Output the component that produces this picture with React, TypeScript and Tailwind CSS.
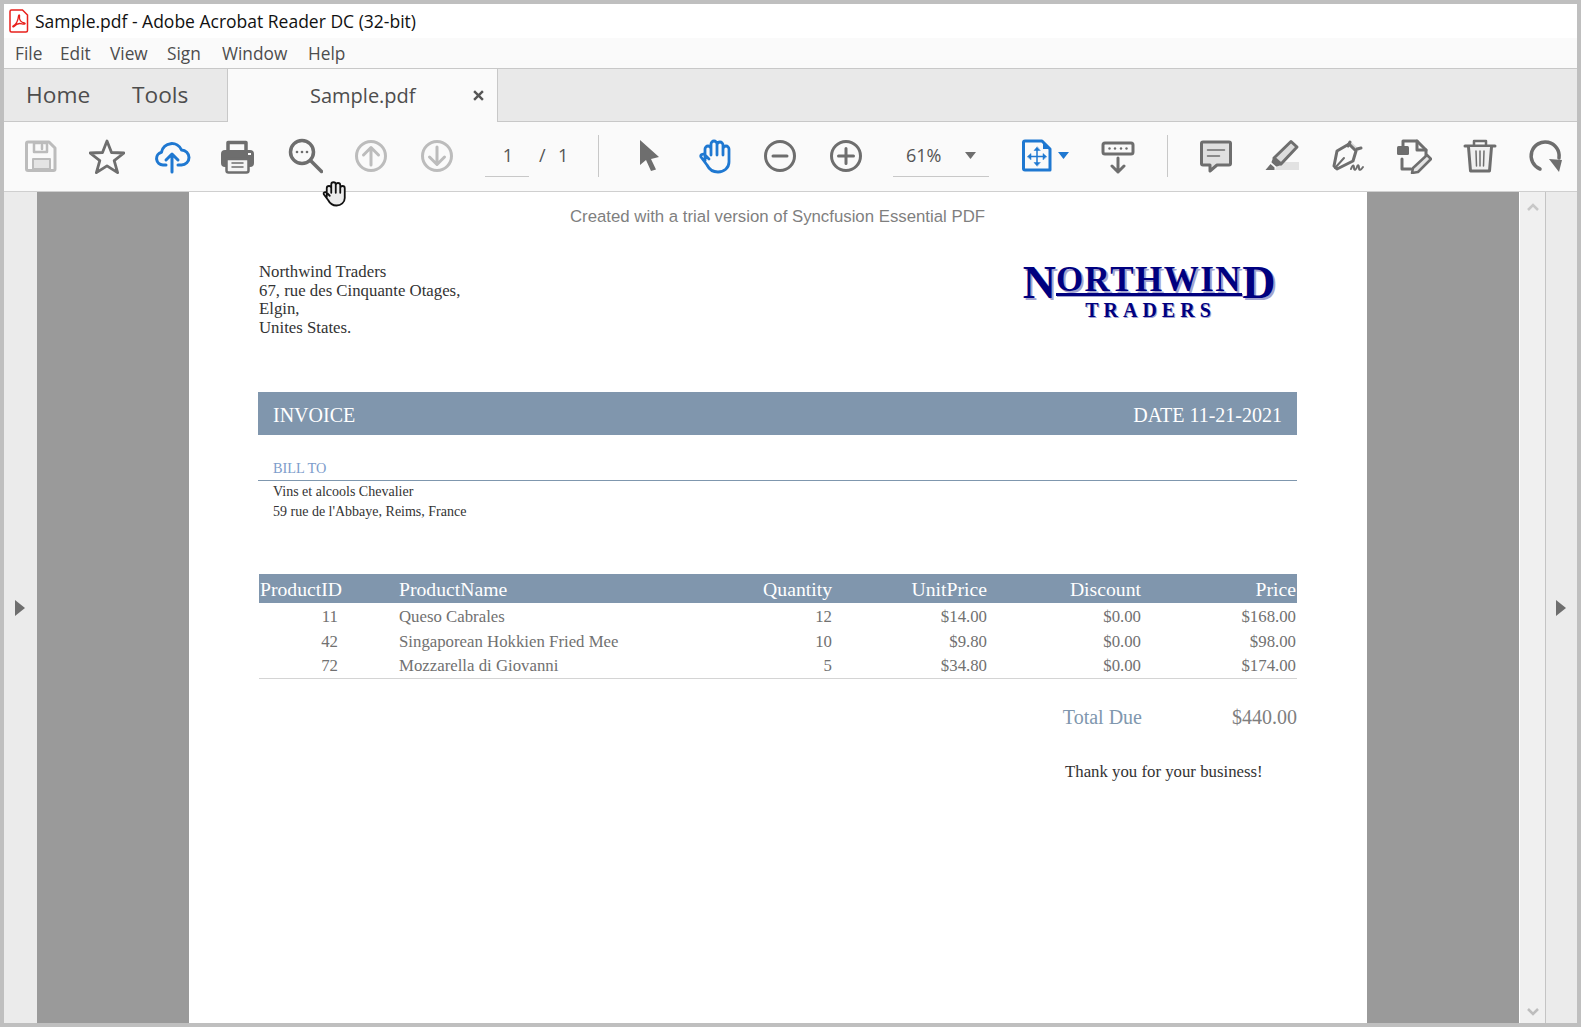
import type { ReactNode } from 'react'

const GREY = '#6e6e6e'
const LIGHT = '#bcbcbc'
const BLUE = '#1f78d1'

function Ico({ children }: { readonly children: ReactNode }) {
  return (
    <svg width="36" height="36" viewBox="0 0 36 36" fill="none" strokeLinecap="round" strokeLinejoin="round">
      {children}
    </svg>
  )
}

function Slot({ children }: { readonly children: ReactNode }) {
  return <div className="flex h-full w-[66px] shrink-0 items-center justify-center">{children}</div>
}

const SaveIcon = () => (
  <Ico>
    <path d="M5 4h21l6 6v21a1.500 1.500 0 0 1-1.500 1.500h-25.500a1.500 1.500 0 0 1-1.500-1.500V5.500A1.500 1.500 0 0 1 5 4z" stroke={LIGHT} strokeWidth="3" />
    <path d="M11 5h13v9H11z" stroke={LIGHT} strokeWidth="2.500" />
    <path d="M19 7v4" stroke={LIGHT} strokeWidth="2.500" />
    <path d="M10 21h17v10H10z" fill="#e4e4e4" stroke={LIGHT} strokeWidth="2" />
  </Ico>
)

const StarIcon = () => (
  <Ico>
    <path d="M18 3l4.500 11.500 12.500.5-9.800 7.700 3.400 12-10.600-6.900-10.600 6.900 3.400-12L1 15l12.500-.5z" stroke={GREY} strokeWidth="2.800" />
  </Ico>
)

const CloudIcon = () => (
  <Ico>
    <path d="M11 27H8a6.500 6.500 0 0 1-1.500-12.800A10.500 10.500 0 0 1 26.500 12a7.500 7.500 0 0 1 0 15H23" stroke={BLUE} strokeWidth="3" />
    <path d="M17 34V17M11 22l6-6 6 6" stroke={BLUE} strokeWidth="3" />
  </Ico>
)

const PrintIcon = () => (
  <Ico>
    <path d="M7 14V4.500h18V14" stroke={GREY} strokeWidth="3.500" />
    <rect x="0" y="12" width="33" height="17" rx="4" fill={GREY} />
    <path d="M5.500 21h22v11.500a2 2 0 0 1-2 2h-18a2 2 0 0 1-2-2z" fill="#f4f4f4" stroke={GREY} strokeWidth="2.500" />
    <path d="M11 25h11M11 29h11" stroke={GREY} strokeWidth="1.500" />
    <rect x="27" y="15" width="3" height="2" fill="#fff" />
  </Ico>
)

const SearchIcon = () => (
  <Ico>
    <circle cx="15" cy="14" r="11.500" stroke={GREY} strokeWidth="3.500" />
    <path d="M23.500 22.500l11 11" stroke={GREY} strokeWidth="3.500" />
    <circle cx="10" cy="14" r="1.300" fill={GREY} />
    <circle cx="15" cy="14" r="1.300" fill={GREY} />
    <circle cx="20" cy="14" r="1.300" fill={GREY} />
  </Ico>
)

const CircleArrow = ({ up }: { readonly up: boolean }) => (
  <Ico>
    <circle cx="18" cy="18" r="14.500" stroke={LIGHT} strokeWidth="3" />
    <path d={up ? 'M18 27V10M10.500 17l7.500-7.500 7.500 7.500' : 'M18 9v17M10.500 19l7.500 7.500 7.500-7.500'} stroke={LIGHT} strokeWidth="3" />
  </Ico>
)

const ArrowIcon = () => (
  <Ico>
    <path d="M10 2v25l6-5 5 11 5-1.500-5-10.500 8-2z" fill={GREY} />
  </Ico>
)

const HAND =
  'M9 23V11a3 3 0 0 1 6 0v6V6a3 3 0 0 1 6 0v11V7a3 3 0 0 1 6 0v10V11a3 3 0 0 1 6 0v13c0 6-5 10-11 10-6 0-9-3-11-7l-6-8c-1-2 2-4 4-2l4 4'

const HandIcon = ({ size, stroke, fill, width }: { readonly size: number; readonly stroke: string; readonly fill: string; readonly width: number }) => (
  <svg width={size} height={size} viewBox="0 0 36 36" fill={fill} strokeLinecap="round" strokeLinejoin="round">
    <path d={HAND} stroke={stroke} strokeWidth={width} />
  </svg>
)

const ZoomOut = () => (
  <Ico>
    <circle cx="18" cy="18" r="14.500" stroke={GREY} strokeWidth="3" />
    <path d="M11 18h14" stroke={GREY} strokeWidth="3" />
  </Ico>
)

const ZoomIn = () => (
  <Ico>
    <circle cx="18" cy="18" r="14.500" stroke={GREY} strokeWidth="3" />
    <path d="M10.500 18h15M18 10.500v15" stroke={GREY} strokeWidth="3" />
  </Ico>
)

const FitIcon = () => (
  <Ico>
    <path d="M6 3h17l8 8v21H6a1.500 1.500 0 0 1-1.500-1.500v-26A1.500 1.500 0 0 1 6 3z" stroke={BLUE} strokeWidth="3" />
    <path d="M24 3v8h8z" fill={BLUE} />
    <path d="M18 9l-3 3.500h6zM18 28l-3-3.500h6zM8.500 18.500l3.500-3v6zM27.500 18.500l-3.500-3v6z" fill={BLUE} stroke={BLUE} strokeWidth="0.500" />
    <path d="M18 12v13M12 18.500h12" stroke={BLUE} strokeWidth="1.500" />
  </Ico>
)

const ReadIcon = () => (
  <Ico>
    <rect x="3" y="5" width="30" height="11" rx="2" stroke={GREY} strokeWidth="3" />
    <circle cx="9.500" cy="10.500" r="1.200" fill={GREY} />
    <circle cx="15" cy="10.500" r="1.200" fill={GREY} />
    <circle cx="21" cy="10.500" r="1.200" fill={GREY} />
    <circle cx="26.500" cy="10.500" r="1.200" fill={GREY} />
    <path d="M18 20v14M12 28l6 6 6-6" stroke={GREY} strokeWidth="3" />
  </Ico>
)

const CommentIcon = () => (
  <Ico>
    <path d="M5 4h26a1.500 1.500 0 0 1 1.500 1.500v20a1.500 1.500 0 0 1-1.500 1.500H19l-7 6v-6H5a1.500 1.500 0 0 1-1.500-1.500v-20A1.500 1.500 0 0 1 5 4z" fill="#e0e0e0" stroke={GREY} strokeWidth="3" />
    <path d="M9.500 12h17M9.500 18h12" stroke={GREY} strokeWidth="1.500" />
  </Ico>
)

const HighlightIcon = () => (
  <Ico>
    <path d="M11 32h24v-8H15z" fill="#e2e2e2" />
    <path d="M27 3.500l6 5.500L17 26l-7-6z" fill="#dcdcdc" stroke={GREY} strokeWidth="3" />
    <path d="M10 20l-1.500 4 4 3.500 4.500-1.500" fill={GREY} stroke={GREY} strokeWidth="2" />
    <path d="M1.500 32l5-6 4 3.500V32z" fill={GREY} />
  </Ico>
)

const SignIcon = () => (
  <Ico>
    <path d="M20 3l10 9-4 2-8-7z" fill="#d9d9d9" />
    <path d="M19 6l7 7-3 10-16 8-3-3 3-15z" stroke={GREY} strokeWidth="3" />
    <path d="M5 30l9-10" stroke={GREY} strokeWidth="2" />
    <path d="M20 4l-2 4M27 11l4-1" stroke={GREY} strokeWidth="3" />
    <path d="M21 31c2-5 3-4 3-1s2 2 3-1 2-2 2 1 2 2 4-1" stroke={GREY} strokeWidth="2" />
  </Ico>
)

const EditIcon = () => (
  <Ico>
    <rect x="1" y="8" width="12" height="9" rx="1.500" fill={GREY} />
    <path d="M7 8V3h14l9 9v5" stroke={GREY} strokeWidth="3" />
    <path d="M21 3v9h9" stroke={GREY} strokeWidth="3" />
    <path d="M6 21v10h9" stroke={GREY} strokeWidth="3" />
    <path d="M31 17l4 4-13 13-6 1 1-5z" fill="#e4e4e4" stroke={GREY} strokeWidth="2.500" />
  </Ico>
)

const TrashIcon = () => (
  <Ico>
    <path d="M3 8h30" stroke={GREY} strokeWidth="3" />
    <path d="M12 7V3h12v4" stroke={GREY} strokeWidth="2.500" />
    <path d="M6.500 9l2 24h19l2-24" fill="#f0f0f0" stroke={GREY} strokeWidth="3" />
    <path d="M14 13l.5 15M18 13v15M22 13l-.5 15" stroke={GREY} strokeWidth="1.500" />
  </Ico>
)

const RotateIcon = () => (
  <Ico>
    <path d="M12 31A14 14 0 1 1 31 20" stroke={GREY} strokeWidth="3.500" />
    <path d="M21 21l13 1-3 12z" fill={GREY} />
  </Ico>
)

const rows = [
  { id: '11', name: 'Queso Cabrales', qty: '12', unit: '$14.00', disc: '$0.00', price: '$168.00', h: 'h-[26px] pt-px' },
  { id: '42', name: 'Singaporean Hokkien Fried Mee', qty: '10', unit: '$9.80', disc: '$0.00', price: '$98.00', h: 'h-[24px]' },
  { id: '72', name: 'Mozzarella di Giovanni', qty: '5', unit: '$34.80', disc: '$0.00', price: '$174.00', h: 'h-[25px]' },
]

function Logo() {
  return (
    <div className="mt-[2px] mr-[21px] flex w-[254px] flex-col items-center font-['Liberation_Serif',serif] font-bold text-[#00007f] [text-shadow:2px_2px_0_#a3a3cf]">
      <div className="flex h-[34px] items-start leading-none">
        <span className="text-[46px] leading-[36px]">N</span>
        <div className="mt-[2px] flex flex-col">
          <span className="text-[35px] leading-[26px] tracking-[1.500px]">ORTHWIN</span>
          <div className="h-[3px] bg-[#00007f] [box-shadow:1px_1px_0_#a3a3cf]" />
        </div>
        <span className="text-[46px] leading-[36px]">D</span>
      </div>
      <span className="pl-[3px] text-[20px] leading-[22px] tracking-[5px] [text-shadow:1px_1px_0_#a3a3cf]">TRADERS</span>
    </div>
  )
}

export default function App() {
  return (
    <div className="flex h-[1027px] w-[1581px] flex-col overflow-hidden border-4 border-[#bfbfbf] bg-white font-['Open_Sans',sans-serif]">
      {/* Title bar */}
      <div className="flex h-[34px] shrink-0 items-center bg-white pl-[5px] text-[17.500px] text-[#111]">
        <svg width="20" height="24" viewBox="0 0 20 24" fill="none" className="mr-[6px]">
          <path d="M2.500 1h11l5 5v15.500a1.500 1.500 0 0 1-1.500 1.500H2.500A1.500 1.500 0 0 1 1 21.500v-19A1.500 1.500 0 0 1 2.500 1z" fill="#fff" stroke="#e8201c" strokeWidth="1.500" />
          <path d="M4 17c3-1.500 5-5 5.500-10 .3-1.800 1.500-1 1 1-.5 3 1.500 5.500 5 6 1.500.5 0 1.500-2 1-3-1-6-.5-8.500 2.500-1 1-1.500 0-1-.5z" stroke="#e8201c" strokeWidth="1.300" />
        </svg>
        <span>Sample.pdf - Adobe Acrobat Reader DC (32-bit)</span>
      </div>

      {/* Menu bar */}
      <div className="flex h-[31px] shrink-0 items-center border-b border-[#c8c8c8] bg-[#fafafa] pt-[2px] pl-[11px] text-[17.300px] text-[#4d4d4d]">
        <span className="w-[45px]">File</span>
        <span className="w-[50px]">Edit</span>
        <span className="w-[57px]">View</span>
        <span className="w-[55px]">Sign</span>
        <span className="w-[86px]">Window</span>
        <span>Help</span>
      </div>

      {/* Tabs */}
      <div className="flex h-[53px] shrink-0 border-b border-[#c8c8c8] bg-[#e9e9e9] text-[#4d4d4d]">
        <div className="flex w-[223px] items-center pl-[22px] text-[22.700px]">
          <span className="w-[106px]">Home</span>
          <span>Tools</span>
        </div>
        <div className="mb-[-1px] flex w-[271px] items-center border-x border-[#c8c8c8] bg-[#fafafa] text-[20px]">
          <span className="ml-[82px] w-[163px]">Sample.pdf</span>
          <svg width="11" height="11" viewBox="0 0 10 10" stroke="#555" strokeWidth="2.200">
            <path d="M1 1l8 8M9 1l-8 8" />
          </svg>
        </div>
      </div>

      {/* Toolbar */}
      <div className="flex h-[70px] shrink-0 items-center border-b border-[#cfcfcf] bg-[#fafafa] pb-[2px] pl-[4px] text-[18px] text-[#555] [&>*]:shrink-0">
        <Slot><SaveIcon /></Slot>
        <Slot><StarIcon /></Slot>
        <Slot><CloudIcon /></Slot>
        <Slot><PrintIcon /></Slot>
        <Slot><SearchIcon /></Slot>
        <Slot><CircleArrow up /></Slot>
        <Slot><CircleArrow up={false} /></Slot>
        <div className="ml-[15px] flex h-[43px] w-[44px] items-center justify-center border-b border-[#c8c8c8] pl-[2px]">1</div>
        <span className="ml-[10px] w-[19px]">/</span>
        <span className="w-[40px]">1</span>
        <div className="h-[42px] w-px bg-[#c8c8c8]" />
        <div className="ml-[16px] flex"><Slot><ArrowIcon /></Slot><Slot><HandIcon size={36} stroke={BLUE} fill="none" width={2.800} /></Slot><Slot><ZoomOut /></Slot><Slot><ZoomIn /></Slot></div>
        <div className="ml-[14px] flex h-[43px] w-[96px] items-center justify-between border-b border-[#c8c8c8] px-[13px]">
          <span>61%</span>
          <svg width="11" height="7" viewBox="0 0 11 7"><path d="M0 0h11L5.500 7z" fill={GREY} /></svg>
        </div>
        <div className="ml-[30px] flex w-[50px] items-center">
          <FitIcon />
          <svg width="11" height="7" viewBox="0 0 11 7" className="ml-[3px]"><path d="M0 0h11L5.500 7z" fill={BLUE} /></svg>
        </div>
        <div className="ml-[16px] flex w-[66px] justify-center"><ReadIcon /></div>
        <div className="ml-[16px] h-[42px] w-px bg-[#c8c8c8]" />
        <div className="ml-[15px] flex"><Slot><CommentIcon /></Slot><Slot><HighlightIcon /></Slot><Slot><SignIcon /></Slot><Slot><EditIcon /></Slot><Slot><TrashIcon /></Slot><Slot><RotateIcon /></Slot></div>
      </div>

      {/* Document area */}
      <div className="flex min-h-0 flex-1">
        <div className="flex w-[33px] shrink-0 items-center justify-center bg-[#ebebeb] pr-px">
          <svg width="10" height="16" viewBox="0 0 10 16"><path d="M0 0l10 8-10 8z" fill={GREY} /></svg>
        </div>
        <div className="flex w-[1482px] shrink-0 justify-center bg-[#9a9a9a]">
          <div className="h-full w-[1178px] bg-white pt-[15px] pr-[70px] pl-[69px] font-['Liberation_Serif',serif]">
            <div className="text-center font-['Liberation_Sans',sans-serif] text-[16.800px] leading-[20px] text-[#7f7f7f]">
              Created with a trial version of Syncfusion Essential PDF
            </div>

            <div className="mt-[36px] flex h-[74px] justify-between">
              <div className="pl-px text-[16.800px] leading-[18.700px] text-[#333]">
                <div>Northwind Traders</div>
                <div>67, rue des Cinquante Otages,</div>
                <div>Elgin,</div>
                <div>Unites States.</div>
              </div>
              <Logo />
            </div>

            <div className="mt-[55px] flex h-[43px] items-center justify-between bg-[#8096ad] px-[15px] pt-[2px] text-[20px] text-white">
              <span>INVOICE</span>
              <span>DATE 11-21-2021</span>
            </div>

            <div className="mt-[23px] h-[23px] border-b border-[#7f97ae] pl-[15px] text-[14.300px] leading-[21px] text-[#7c9ccb]">BILL TO</div>
            <div className="pt-px pl-[15px] text-[14px] leading-[20px] text-[#333]">
              <div>Vins et alcools Chevalier</div>
              <div>59 rue de l'Abbaye, Reims, France</div>
            </div>

            <div className="mt-[52px] ml-px border-b border-[#d4d4d4]">
              <div className="grid h-[29px] grid-cols-[140px_260px_173px_155px_154px_156px] items-center bg-[#8096ad] pt-[2px] text-[19.700px] leading-[27px] text-white">
                <span className="pl-[1px]">ProductID</span>
                <span>ProductName</span>
                <span className="text-right">Quantity</span>
                <span className="text-right">UnitPrice</span>
                <span className="text-right">Discount</span>
                <span className="pr-px text-right">Price</span>
              </div>
              {rows.map((r) => (
                <div
                  key={r.id}
                  className={`grid grid-cols-[140px_260px_173px_155px_154px_156px] items-center text-[16.800px] text-[#717171] ${r.h}`}
                >
                  <span className="pr-[61px] text-right">{r.id}</span>
                  <span>{r.name}</span>
                  <span className="text-right">{r.qty}</span>
                  <span className="text-right">{r.unit}</span>
                  <span className="text-right">{r.disc}</span>
                  <span className="pr-px text-right">{r.price}</span>
                </div>
              ))}
            </div>

            <div className="mt-[26px] flex items-center justify-end text-[20px] leading-[24px]">
              <span className="text-[#8097ae]">Total Due</span>
              <span className="w-[155px] text-right text-[#7f7f7f]">$440.00</span>
            </div>

            <div className="mt-[33px] ml-[807px] text-[16.800px] leading-[20px] text-[#333]">Thank you for your business!</div>
          </div>
        </div>

        {/* Scrollbar strip */}
        <div className="flex w-[27px] shrink-0 flex-col items-center justify-between border-r border-l border-r-[#c4c4c4] border-l-white bg-[#f0f0f0] pt-[11px] pb-[7px]">
          <svg width="12" height="8" viewBox="0 0 12 8" fill="none" stroke="#c8c8c8" strokeWidth="2.500"><path d="M1 7l5-5 5 5" /></svg>
          <svg width="12" height="8" viewBox="0 0 12 8" fill="none" stroke="#bdbdbd" strokeWidth="2.500"><path d="M1 1l5 5 5-5" /></svg>
        </div>
        <div className="flex flex-1 items-center justify-center bg-[#ebebeb] pr-px">
          <svg width="10" height="16" viewBox="0 0 10 16"><path d="M0 0l10 8-10 8z" fill={GREY} /></svg>
        </div>
      </div>

      {/* Mouse pointer over the toolbar edge */}
      <div className="absolute top-[180px] left-[320px]">
        <HandIcon size={27} stroke="#111" fill="#ececec" width={2.400} />
      </div>
    </div>
  )
}
